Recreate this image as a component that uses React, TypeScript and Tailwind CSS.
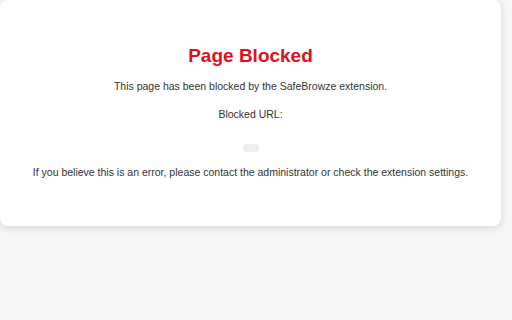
export default function App() {
  return (
    <div className="min-h-[320px] bg-[#f6f6f6] font-['Liberation_Sans',Arial,sans-serif] text-[#333]">
      <div className="flex h-[226px] w-[501px] flex-col items-center rounded-lg bg-white pt-[45px] text-center shadow-[0_2px_8px_rgba(0,0,0,0.12)]">
        <h1 className="text-[19px] font-bold leading-[22px] text-[#e0101e]">Page Blocked</h1>
        <p className="mt-[13px] text-[10.5px] leading-[13px]">
          This page has been blocked by the SafeBrowze extension.
        </p>
        <p className="mt-[15px] text-[10.5px] leading-[13px]">Blocked URL:</p>
        <code className="mt-[23px] h-[8px] w-[16px] rounded bg-[#eee]"></code>
        <p className="mt-[14px] text-[10.5px] leading-[13px]">
          If you believe this is an error, please contact the administrator or check the extension settings.
        </p>
      </div>
    </div>
  )
}
